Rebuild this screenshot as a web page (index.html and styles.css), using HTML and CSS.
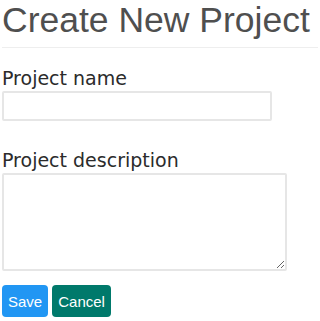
FILE: index.html
```html
<!DOCTYPE html>
<html lang="en">
<head>
<meta charset="utf-8">
<title>Create New Project</title>
<link rel="stylesheet" href="styles.css">
</head>
<body>
<h1 class="page-title">Create New Project</h1>
<form class="project-form">
  <label class="field-label" for="name">Project name</label>
  <input class="text-input" id="name" type="text">
  <label class="field-label" for="desc">Project description</label>
  <textarea class="text-area" id="desc"></textarea>
  <div class="actions">
    <button type="button" class="btn btn-save">Save</button>
    <button type="button" class="btn btn-cancel">Cancel</button>
  </div>
</form>
</body>
</html>
```

FILE: styles.css
```css
html, body {
  margin: 0;
  background: #fff;
}
body {
  padding: 0 2px;
}
.page-title {
  margin: 0;
  font-family: "Liberation Sans", Arial, sans-serif;
  font-weight: normal;
  font-size: 35.5px;
  line-height: 40px;
  color: #4f4f4f;
  padding-bottom: 7px;
  border-bottom: 1px solid #eee;
  white-space: nowrap;
}
.project-form {
  margin-top: 19px;
  display: flex;
  flex-direction: column;
  align-items: flex-start;
}
.field-label {
  display: block;
  font-family: "DejaVu Sans", Verdana, sans-serif;
  font-size: 19px;
  line-height: 22px;
  color: #2b2b2b;
  margin-bottom: 2px;
}
.text-input {
  display: block;
  box-sizing: border-box;
  width: 270px;
  height: 30px;
  border: 2px solid #e6e6e6;
  border-radius: 2px;
  margin: 0 0 28px 0;
  padding: 2px 4px;
  font-size: 15px;
  outline: none;
}
.text-area {
  display: block;
  box-sizing: border-box;
  width: 285px;
  height: 98px;
  border: 2px solid #e6e6e6;
  border-radius: 2px;
  margin: 0;
  padding: 2px 4px;
  font-size: 15px;
  outline: none;
}
.actions {
  display: flex;
  gap: 4px;
  margin-top: 14px;
}
.btn {
  height: 32px;
  padding: 0 6px;
  border: none;
  border-radius: 4px;
  font-family: "Liberation Sans", Arial, sans-serif;
  font-size: 15px;
  color: #fff;
  cursor: pointer;
}
.btn-save {
  background: #2196f3;
}
.btn-cancel {
  background: #00796b;
}
```
